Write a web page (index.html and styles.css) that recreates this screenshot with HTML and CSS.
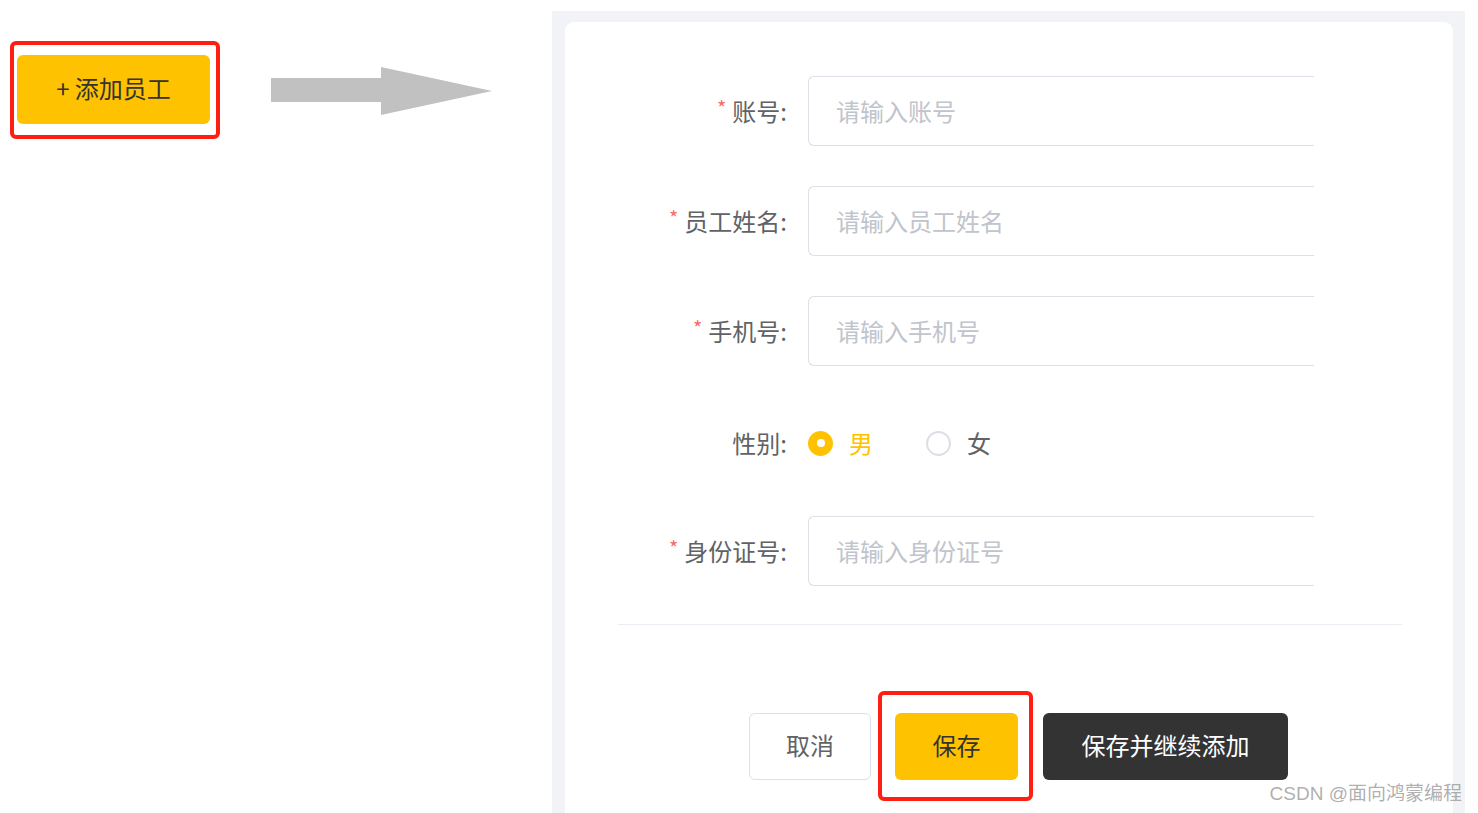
FILE: index.html
```html
<!DOCTYPE html>
<html lang="zh-CN">
<head>
<meta charset="utf-8">
<title>添加员工</title>
<link rel="stylesheet" href="styles.css">
</head>
<body>
<div class="page">
  <div class="left">
    <div class="hl hl-add">
      <button class="btn btn-add">+ 添加员工</button>
    </div>
    <svg class="arrow" width="221" height="48" viewBox="0 0 221 48">
      <polygon points="0,11 110,11 110,0 221,24 110,48 110,35 0,35" fill="#c1c1c1"/>
    </svg>
  </div>
  <div class="panel">
    <div class="card">
      <form class="form">
        <div class="row">
          <label class="label"><span class="req">*</span>账号:</label>
          <div class="input"><span class="ph">请输入账号</span></div>
        </div>
        <div class="row">
          <label class="label"><span class="req">*</span>员工姓名:</label>
          <div class="input"><span class="ph">请输入员工姓名</span></div>
        </div>
        <div class="row">
          <label class="label"><span class="req">*</span>手机号:</label>
          <div class="input"><span class="ph">请输入手机号</span></div>
        </div>
        <div class="row row-radio">
          <label class="label">性别:</label>
          <div class="radios">
            <span class="radio checked"><span class="dot"></span><span class="rtext">男</span></span>
            <span class="radio"><span class="dot"></span><span class="rtext">女</span></span>
          </div>
        </div>
        <div class="row">
          <label class="label"><span class="req">*</span>身份证号:</label>
          <div class="input"><span class="ph">请输入身份证号</span></div>
        </div>
      </form>
      <div class="divider"></div>
      <div class="actions">
        <button class="btn btn-cancel">取消</button>
        <div class="hl hl-save">
          <button class="btn btn-save">保存</button>
        </div>
        <button class="btn btn-dark">保存并继续添加</button>
      </div>
    </div>
  </div>
</div>
<div class="watermark">CSDN @面向鸿蒙编程</div>
</body>
</html>
```
FILE: styles.css
```css
* { box-sizing: border-box; }
html, body {
  margin: 0;
  padding: 0;
  background: #ffffff;
}
body {
  width: 1478px;
  height: 813px;
  overflow: hidden;
  position: relative;
  font-family: "Noto Sans CJK SC", "Liberation Sans", sans-serif;
}
.page {
  display: flex;
  align-items: flex-start;
}
.left {
  width: 552px;
  flex: none;
  display: flex;
  align-items: flex-start;
  padding: 41px 0 0 10px;
}
.hl {
  border: 4px solid #ff1e12;
  border-radius: 6px;
  display: flex;
}
.hl-add {
  width: 210px;
  height: 98px;
  padding: 10px 6px 0 3px;
}
.btn {
  font-family: "Noto Sans CJK SC", "Liberation Sans", sans-serif;
  font-size: 24px;
  line-height: 1;
  border: none;
  border-radius: 6px;
  cursor: pointer;
  display: flex;
  align-items: center;
  justify-content: center;
  padding: 0 0 3px 0;
}
.btn-add {
  width: 193px;
  height: 69px;
  background: #ffc200;
  color: #333333;
}
.arrow {
  display: block;
  margin: 26px 0 0 51px;
}
.panel {
  margin-top: 11px;
  width: 913px;
  height: 802px;
  background: #f2f3f7;
  padding: 11px 12px 0 13px;
}
.card {
  background: #ffffff;
  border-radius: 9px 9px 0 0;
  height: 791px;
  padding-top: 54px;
}
.form {
  display: flex;
  flex-direction: column;
  gap: 40px;
}
.row {
  display: flex;
  align-items: center;
  height: 70px;
}
.row-radio {
  padding-top: 4px;
}
.label {
  width: 222px;
  flex: none;
  text-align: right;
  font-size: 24px;
  line-height: 1;
  color: #606266;
  display: flex;
  justify-content: flex-end;
  align-items: center;
}
.req {
  color: #f56c6c;
  font-size: 20px;
  margin-right: 6px;
  position: relative;
  top: -3px;
}
.input {
  margin-left: 21px;
  width: 506px;
  height: 70px;
  border: 1px solid #dcdfe6;
  border-right: none;
  border-radius: 6px 0 0 6px;
  display: flex;
  align-items: center;
  padding-left: 27px;
}
.ph {
  font-size: 24px;
  line-height: 1;
  color: #c0c4cc;
}
.radios {
  margin-left: 21px;
  display: flex;
  align-items: center;
}
.radio {
  display: flex;
  align-items: center;
  margin-right: 53px;
}
.dot {
  width: 25px;
  height: 25px;
  border-radius: 50%;
  border: 2px solid #dcdfe6;
  background: #ffffff;
  margin-right: 16px;
  position: relative;
}
.radio.checked .dot {
  border-color: #ffc200;
  background: #ffc200;
}
.radio.checked .dot::after {
  content: "";
  position: absolute;
  left: 50%;
  top: 50%;
  width: 8px;
  height: 8px;
  margin: -4px 0 0 -4px;
  border-radius: 50%;
  background: #ffffff;
}
.rtext {
  font-size: 24px;
  line-height: 1;
  color: #606266;
}
.radio.checked .rtext {
  color: #ffc200;
}
.divider {
  margin: 38px 0 0 53px;
  width: 784px;
  height: 1px;
  background: #ebeef5;
}
.actions {
  margin: 66px 0 0 184px;
  display: flex;
  align-items: center;
}
.btn-cancel {
  width: 122px;
  height: 67px;
  background: #ffffff;
  border: 1px solid #dcdfe6;
  color: #606266;
  margin-right: 7px;
}
.hl-save {
  width: 155px;
  height: 110px;
  padding: 18px 0 0 13px;
  margin-right: 10px;
}
.btn-save {
  width: 123px;
  height: 67px;
  background: #ffc200;
  color: #333333;
}
.btn-dark {
  width: 245px;
  height: 67px;
  background: #333333;
  color: #ffffff;
}
.watermark {
  position: absolute;
  right: 16px;
  bottom: 7px;
  font-family: "Liberation Sans", "Noto Sans CJK SC", sans-serif;
  font-size: 19px;
  line-height: 24px;
  color: rgba(130, 130, 130, 0.65);
  white-space: nowrap;
}
```
